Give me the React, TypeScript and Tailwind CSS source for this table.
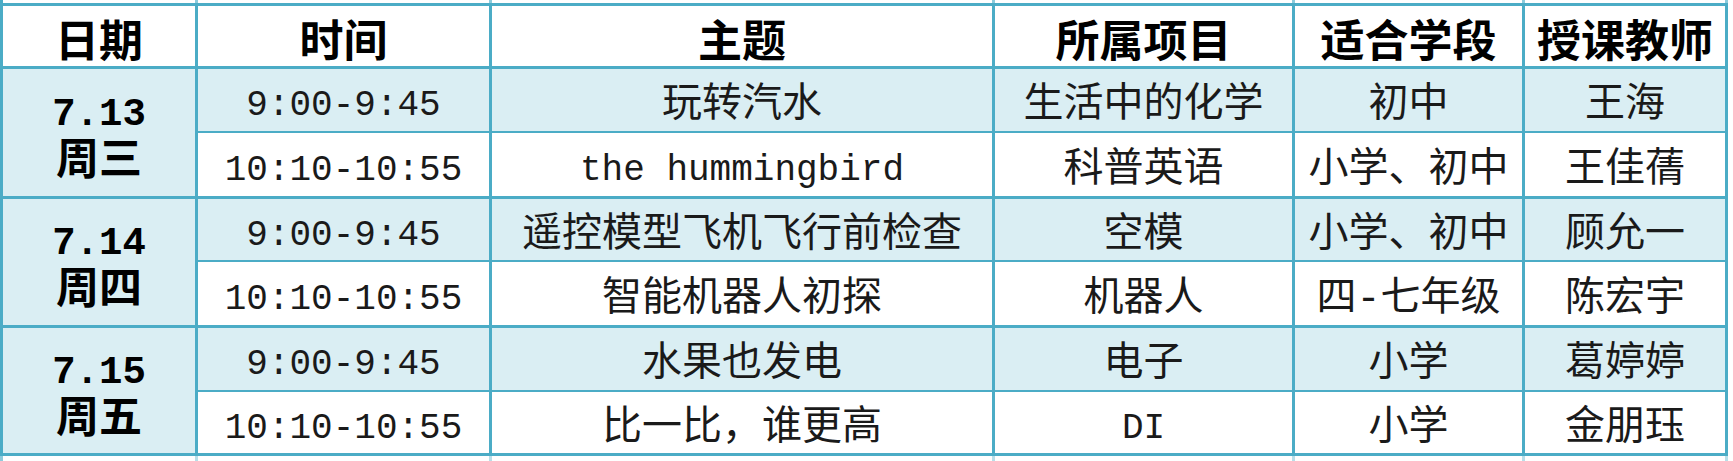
import React from "react";

type Group = { date: string; day: string; rows: string[][]; heights: [string, string] };

const groups: Group[] = [
  {
    date: "7.13",
    day: "周三",
    heights: ["h-[64px]", "h-[66px]"],
    rows: [
      ["9:00-9:45", "玩转汽水", "生活中的化学", "初中", "王海"],
      ["10:10-10:55", "the hummingbird", "科普英语", "小学、初中", "王佳蒨"],
    ],
  },
  {
    date: "7.14",
    day: "周四",
    heights: ["h-[63px]", "h-[66px]"],
    rows: [
      ["9:00-9:45", "遥控模型飞机飞行前检查", "空模", "小学、初中", "顾允一"],
      ["10:10-10:55", "智能机器人初探", "机器人", "四-七年级", "陈宏宇"],
    ],
  },
  {
    date: "7.15",
    day: "周五",
    heights: ["h-[64px]", "h-[64px]"],
    rows: [
      ["9:00-9:45", "水果也发电", "电子", "小学", "葛婷婷"],
      ["10:10-10:55", "比一比，谁更高", "DI", "小学", "金朋珏"],
    ],
  },
];

const headers = ["日期", "时间", "主题", "所属项目", "适合学段", "授课教师"];

const cols = "grid grid-cols-[195px_294px_503px_300px_230px_203px]";
const body = { fontFamily: '"Liberation Mono", "Noto Sans CJK SC", monospace' };
const head = { fontFamily: '"Noto Sans CJK SC", "Liberation Sans", sans-serif' };

export default function App() {
  return (
    <div className="w-[1733px] h-[461px] bg-white overflow-hidden">
      {/* sliver of the row above */}
      <div className={`${cols} h-[3px] w-fit border-l-[3px] border-[#4bacc6]`}>
        {headers.map((h) => (
          <div key={h} className="border-r-[3px] border-[#8ccbdc]" />
        ))}
      </div>
      <div className={`${cols} w-fit border-l-[3px] border-t-[3px] border-[#4bacc6] text-black`}>
        {headers.map((h) => (
          <div
            key={h}
            style={head}
            className="h-[63px] flex items-center justify-center pt-[4px] border-r-[3px] border-b-[3px] border-[#4bacc6] bg-white text-[44px] font-bold leading-none"
          >
            {h}
          </div>
        ))}
        {groups.map((g) => (
          <React.Fragment key={g.date}>
            <div
              style={body}
              className="row-span-2 flex flex-col items-center justify-center pt-[12px] border-r-[3px] border-b-[3px] border-[#4bacc6] bg-[#daeef3] font-bold leading-[47px]"
            >
              <span className="text-[39px]">{g.date}</span>
              <span className="text-[43px]">{g.day}</span>
            </div>
            {g.rows.map((r, ri) =>
              r.map((c, ci) => (
                <div
                  key={`${ri}-${ci}`}
                  style={body}
                  className={`${g.heights[ri]} flex items-center justify-center pt-[12px] border-r-[3px] border-[#4bacc6] leading-none text-[#1a1a1a] ${
                    ri === 0 ? "border-b-[2px] bg-[#daeef3]" : "border-b-[3px] bg-white"
                  } ${ci === 0 || c === "the hummingbird" || c === "DI" ? "text-[36px]" : "text-[40px]"}`}
                >
                  {c}
                </div>
              ))
            )}
          </React.Fragment>
        ))}
      </div>
      {/* sliver of the row below */}
      <div className={`${cols} h-[8px] w-fit border-l-[3px] border-[#8ccbdc]`}>
        {headers.map((h) => (
          <div key={h} className="border-r-[3px] border-[#b9dfe9]" />
        ))}
      </div>
    </div>
  );
}
